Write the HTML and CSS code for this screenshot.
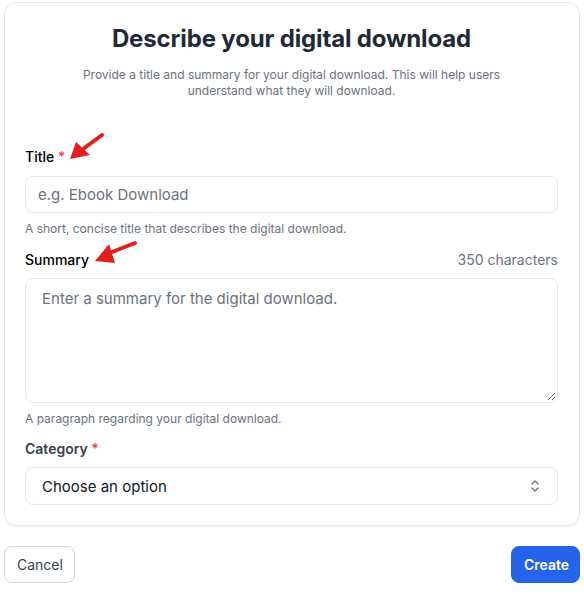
FILE: index.html
```html
<!DOCTYPE html>
<html lang="en">
<head>
<meta charset="utf-8">
<link rel="stylesheet" href="styles.css">
</head>
<body>
<div class="page">
  <div class="card">
    <h1 class="heading">Describe your digital download</h1>
    <p class="sub">Provide a title and summary for your digital download. This will help users understand what they will download.</p>

    <div class="field field-title">
      <div class="label-row">
        <label class="label">Title <span class="req">*</span></label>
        <svg class="arrow arrow-title" width="50" height="35" viewBox="0 0 50 35"><path d="M23 19 L42 5" stroke="#e51c1c" stroke-width="4" stroke-linecap="round"/><path d="M10 29 L16 12 L30 25 Z" fill="#e51c1c"/></svg>
      </div>
      <div class="input">e.g. Ebook Download</div>
      <div class="help">A short, concise title that describes the digital download.</div>
    </div>

    <div class="field field-summary">
      <div class="label-row">
        <label class="label">Summary</label>
        <svg class="arrow arrow-summary" width="52" height="32" viewBox="0 0 52 32"><path d="M24 15 L47 6" stroke="#e51c1c" stroke-width="4" stroke-linecap="round"/><path d="M7 24 L21 7 L27 26 Z" fill="#e51c1c"/></svg>
        <span class="count">350 characters</span>
      </div>
      <div class="textarea">Enter a summary for the digital download.
        <svg class="grip" width="9" height="9" viewBox="0 0 9 9"><path d="M8 1 L1 8 M8 5 L5 8" stroke="#6b7280" stroke-width="1"/></svg>
      </div>
      <div class="help">A paragraph regarding your digital download.</div>
    </div>

    <div class="field field-cat">
      <div class="label-row">
        <label class="label label-cat">Category <span class="req">*</span></label>
      </div>
      <div class="select">
        <span>Choose an option</span>
        <svg class="chev" width="10" height="14" viewBox="0 0 10 14"><path d="M2 5 L5 2 L8 5 M2 9 L5 12 L8 9" fill="none" stroke="#6b7280" stroke-width="1.4" stroke-linecap="round" stroke-linejoin="round"/></svg>
      </div>
    </div>
  </div>

  <div class="actions">
    <button class="btn btn-cancel">Cancel</button>
    <button class="btn btn-create">Create</button>
  </div>
</div>
</body>
</html>
```
FILE: styles.css
```css
* { box-sizing: border-box; }
html, body { margin: 0; padding: 0; background: #ffffff; }
body { font-family: Inter, "Noto Sans", "Liberation Sans", sans-serif; color: #111827; }
.page { padding: 2px 4px 0 4px; width: 584px; }
.card {
  border: 1px solid #e5e7eb;
  border-radius: 12px;
  box-shadow: 0 1px 2px rgba(0,0,0,0.04);
  padding: 20px 21px 20px 20px;
  display: flex;
  flex-direction: column;
}
.heading {
  margin: 0;
  font-size: 24px;
  line-height: 32px;
  font-weight: 700;
  text-align: center;
  color: #1f2937;
  letter-spacing: -0.15px;
}
.sub {
  margin: 12px auto 0;
  width: 460px;
  font-size: 12px;
  line-height: 16px;
  text-align: center;
  color: #6b7280;
}
.field { display: flex; flex-direction: column; }
.field-title { margin-top: 48px; }
.field-summary { margin-top: 13px; }
.field-cat { margin-top: 12px; }
.label-row { display: flex; align-items: center; height: 20px; position: relative; }
.label { font-size: 14px; line-height: 20px; font-weight: 500; color: #000; }
.label-cat { font-weight: 600; color: #374151; }
.req { color: #ef4444; }
.count { margin-left: auto; font-size: 14px; line-height: 20px; color: #6b7280; }
.arrow { position: absolute; }
.arrow-title { left: 35px; top: -17px; }
.arrow-summary { left: 63px; top: -13px; }
.input, .select {
  margin-top: 9px;
  height: 37px;
  border: 1px solid #e5e7eb;
  border-radius: 8px;
  display: flex;
  align-items: center;
  font-size: 15px;
}
.input { padding-left: 12px; color: #6b7280; }
.select { margin-top: 8px; height: 38px; padding: 0 17px 0 16px; color: #111827; justify-content: space-between; }
.textarea {
  margin-top: 8px;
  height: 125px;
  border: 1px solid #e5e7eb;
  border-radius: 8px;
  padding: 10px 16px;
  font-size: 15px;
  line-height: 20px;
  color: #6b7280;
  position: relative;
}
.grip { position: absolute; right: 1px; bottom: 1px; }
.help { margin-top: 8px; font-size: 12px; line-height: 16px; color: #6b7280; }
.actions { display: flex; justify-content: space-between; margin-top: 20px; }
.btn {
  height: 37px;
  border-radius: 8px;
  font-family: Inter, "Noto Sans", sans-serif;
  font-size: 14px;
  padding: 0 12px;
}
.btn-cancel { background: #fff; border: 1px solid #d1d5db; color: #374151; width: 71px; }
.btn-create { background: #2563eb; border: 1px solid #2563eb; color: #fff; font-weight: 600; width: 69px; }
```
